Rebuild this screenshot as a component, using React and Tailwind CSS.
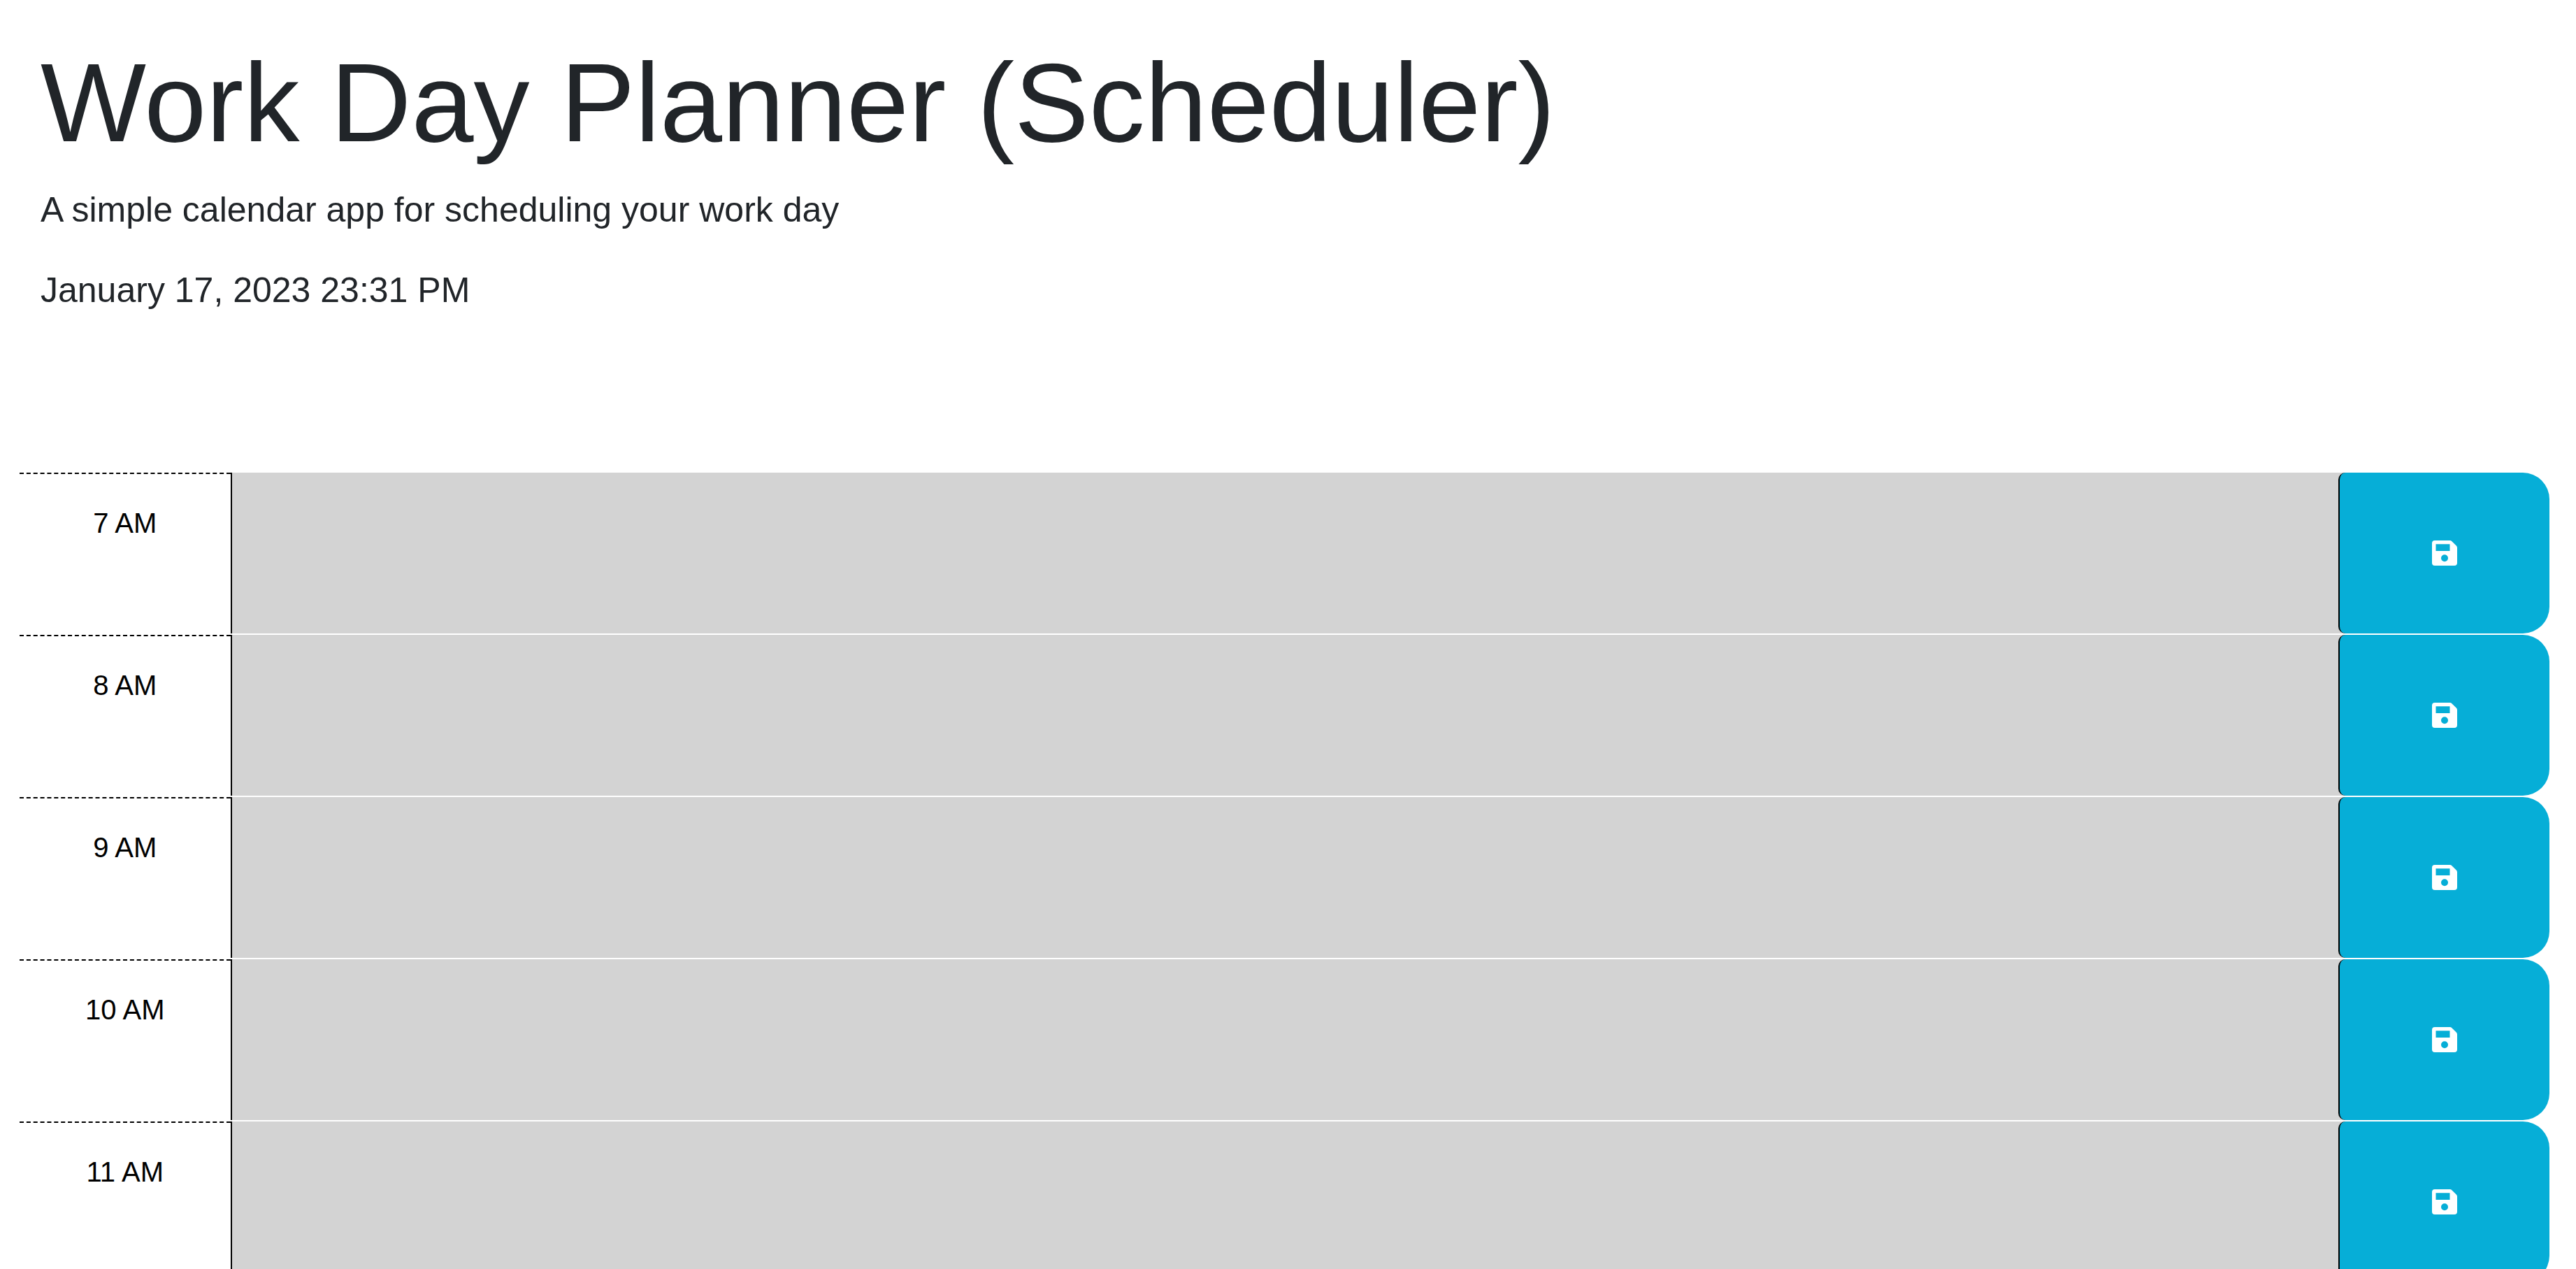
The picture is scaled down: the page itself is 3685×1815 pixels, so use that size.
const hours = ["7 AM", "8 AM", "9 AM", "10 AM", "11 AM"];

function SaveIcon() {
  return (
    <svg viewBox="0 0 36 36" className="size-9" fill="currentColor" aria-hidden="true">
      <path
        fillRule="evenodd"
        d="M4 0H25.600a4 4 0 0 1 2.800 1.200L34.800 7.600a4 4 0 0 1 1.200 2.800V32a4 4 0 0 1-4 4H4A4 4 0 0 1 0 32V4A4 4 0 0 1 4 0ZM5.500 5.300V15H25.500V5.300ZM18 20.300a5 5 0 1 0 0 10a5 5 0 1 0 0-10Z"
      />
    </svg>
  );
}

function TimeBlock({ hour }) {
  const id = "hour-" + hour.replace(" ", "-").toLowerCase();
  return (
    <div className="grid h-[230px] grid-cols-12">
      <label
        htmlFor={id}
        className="border-t-2 border-dashed border-black pt-10 text-center text-[40px] leading-[60px] text-black"
      >
        {hour}
      </label>
      <textarea
        id={id}
        className="col-span-10 block h-full w-full resize-none border-l-2 border-black bg-[#d3d3d3] p-5 text-[40px] leading-[60px] text-black outline-none"
      />
      <div className="bg-linear-to-r from-[#d3d3d3] from-5% to-white to-5%">
        <button
          type="button"
          aria-label={"Save " + hour}
          className="flex h-full w-full cursor-pointer items-center justify-center rounded-l-[10px] rounded-r-[38px] border-l-2 border-black bg-[#06aed7] text-white"
        >
          <SaveIcon />
        </button>
      </div>
    </div>
  );
}

export default function App() {
  return (
    <div className="h-screen overflow-hidden bg-white font-['Liberation_Sans',Arial,sans-serif] text-[#212529]">
      <header className="px-[58px] pt-[51px] pb-[183px]">
        <h1 className="mb-5 text-[160px] leading-[192px]">Work Day Planner (Scheduler)</h1>
        <p className="mb-10 text-[50px] leading-[75px]">A simple calendar app for scheduling your work day</p>
        <p className="mb-10 text-[50px] leading-[75px]">January 17, 2023 23:31 PM</p>
      </header>
      <main className="flex flex-col gap-0.5 pr-[38px] pl-7">
        {hours.map((hour) => (
          <TimeBlock key={hour} hour={hour} />
        ))}
      </main>
    </div>
  );
}
